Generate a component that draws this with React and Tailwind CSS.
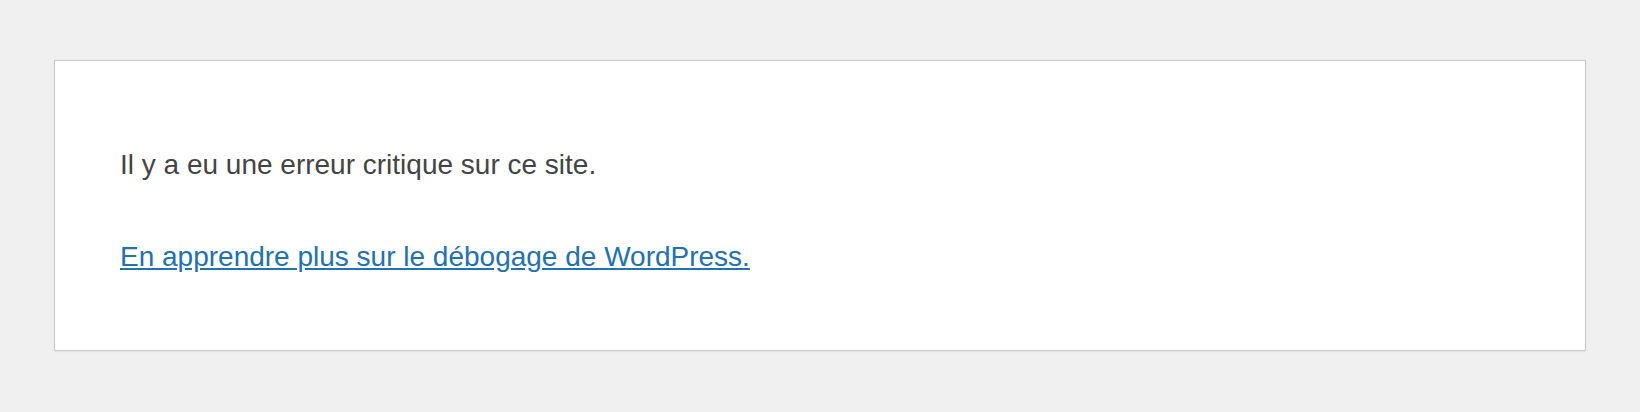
export default function App() {
  return (
    <div className="min-h-[412px] bg-[#f0f0f1] pt-[60px] pb-[60px] font-['Liberation_Sans',Arial,sans-serif] text-[#444]">
      <div className="mx-auto w-[1532px] border border-[#c8cacc] bg-white pl-[65px] pr-[64px] pt-[33px] pb-[32px] shadow-[0_1px_2px_rgba(0,0,0,0.06)]">
        <div>
          <p className="mt-[50px] mb-[40px] text-[28px] leading-[42px]">Il y a eu une erreur critique sur ce site.</p>
          <p className="mt-[50px] mb-[40px] text-[28px] leading-[42px]">
            <a href="#" className="text-[#2271b1] underline">
              En apprendre plus sur le débogage de WordPress.
            </a>
          </p>
        </div>
      </div>
    </div>
  );
}
